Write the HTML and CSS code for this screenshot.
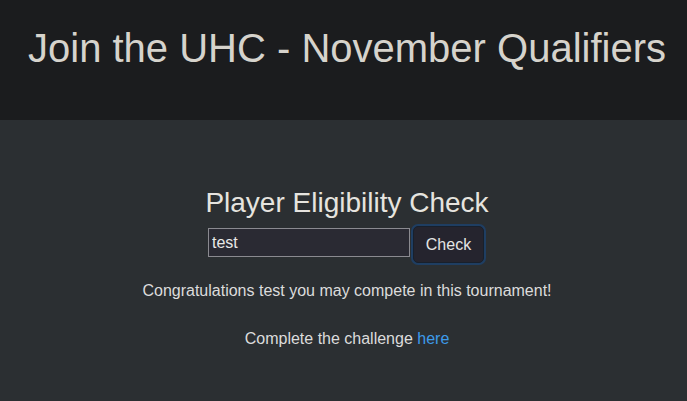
FILE: index.html
```html
<!DOCTYPE html>
<html>
<head>
<meta charset="utf-8">
<link rel="stylesheet" href="styles.css">
</head>
<body>
<header class="hero">
  <h1 class="title">Join the UHC - November Qualifiers</h1>
</header>
<main class="content">
  <h2 class="subtitle">Player Eligibility Check</h2>
  <form class="check-form">
    <input class="name-input" type="text" value="test">
    <button class="check-btn" type="button">Check</button>
  </form>
  <p class="result">Congratulations test you may compete in this tournament!</p>
  <p class="challenge">Complete the challenge <a href="#" class="link">here</a></p>
</main>
</body>
</html>
```
FILE: styles.css
```css
html, body {
  margin: 0;
  padding: 0;
}
body {
  background: #2b2f32;
  color: #dcdcdc;
  font-family: "Liberation Sans", Arial, sans-serif;
  height: 401px;
}
.hero {
  background: #1b1c1e;
  height: 120px;
  box-sizing: border-box;
  padding: 24px 0 0 7px;
  text-align: center;
}
.title {
  margin: 0;
  font-weight: 400;
  font-size: 40px;
  line-height: 48px;
  color: #d6d3cc;
}
.content {
  padding: 66px 0 0 7px;
  display: flex;
  flex-direction: column;
  align-items: center;
}
.subtitle {
  margin: 0;
  font-weight: 400;
  font-size: 28px;
  line-height: 34px;
  color: #e6e4df;
}
.check-form {
  display: flex;
  align-items: flex-start;
  gap: 1px;
  margin-top: 4px;
}
.name-input {
  flex: none;
  width: 202px;
  height: 29px;
  box-sizing: border-box;
  background: #2a2a33;
  border: 1px solid #8a8a90;
  color: #e8e8e8;
  font-family: "Liberation Sans", Arial, sans-serif;
  font-size: 16px;
  padding: 0 3px;
  margin: 4px 0 0;
}
.check-btn {
  flex: none;
  width: 71px;
  height: 37px;
  box-sizing: border-box;
  background: #25242e;
  color: #e4e4e4;
  border: 1px solid #18202c;
  box-shadow: 0 0 0 2px #1f3e62;
  border-radius: 5px;
  font-family: "Liberation Sans", Arial, sans-serif;
  font-size: 16px;
  padding: 0;
  margin: 2px;
}
.result {
  margin: 16px 0 0;
  font-size: 16px;
  line-height: 20px;
}
.challenge {
  margin: 28px 0 0;
  font-size: 16px;
  line-height: 20px;
}
.link {
  color: #3d9bea;
  text-decoration: none;
}
```
